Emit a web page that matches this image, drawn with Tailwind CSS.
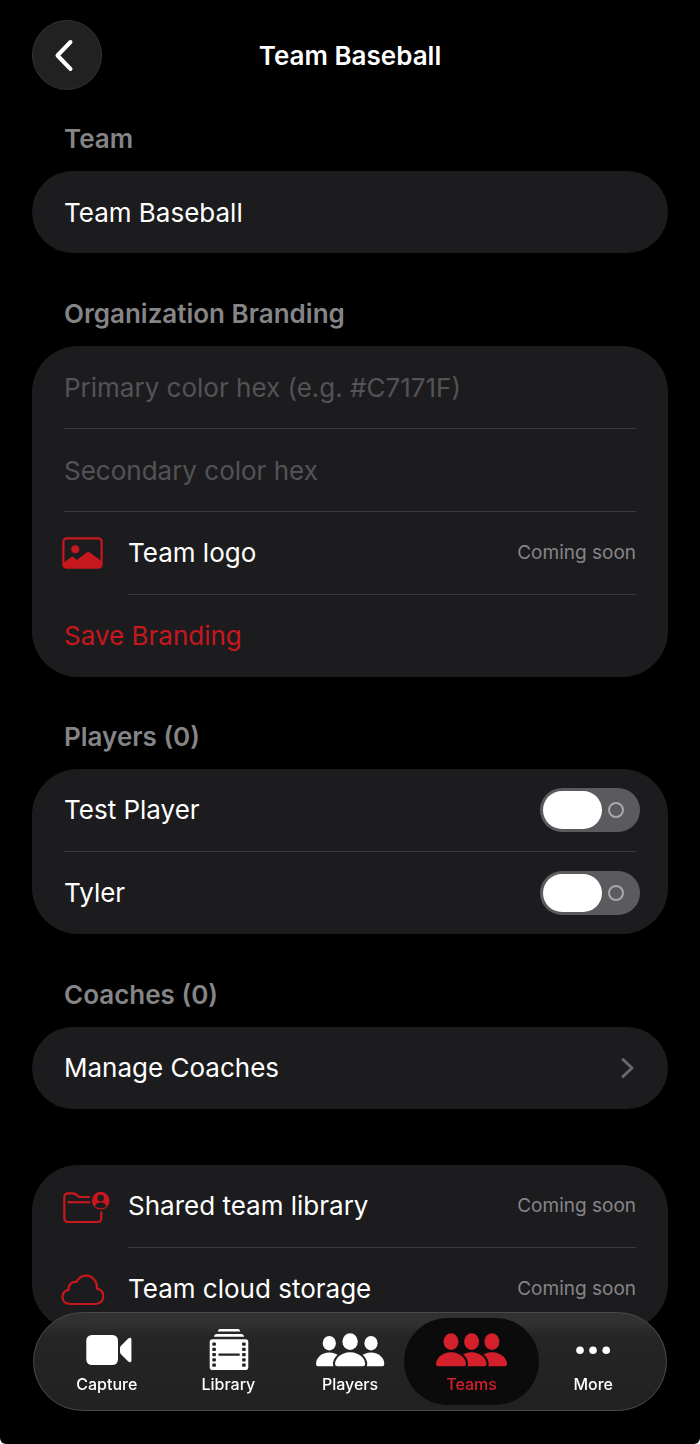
<!DOCTYPE html>
<html lang="en">
<head>
    <meta charset="UTF-8">
    <meta name="viewport" content="width=device-width, initial-scale=1.0">
    <title>Team Baseball</title>
    <script src="https://cdn.jsdelivr.net/npm/@tailwindcss/browser@4"></script>
</head>
<body class="bg-white font-['Inter','Liberation_Sans',sans-serif] text-[26px] leading-8 text-white">
    <div class="min-h-screen rounded-b-md bg-black px-8 pt-5 pb-28">

        <header class="mb-[33px] grid grid-cols-[70px_1fr_70px] items-center">
            <button type="button" aria-label="Back" class="flex size-[70px] items-center justify-center rounded-full border border-[#333334] bg-[#212121]">
                <svg class="size-10" viewBox="0 0 40 40" fill="none" stroke="currentColor" stroke-width="4" stroke-linecap="round" stroke-linejoin="round">
                    <path d="M23.5 7 L10.5 20.5 L23.5 34"/>
                </svg>
            </button>
            <h1 class="pt-0.5 text-center font-semibold">Team Baseball</h1>
        </header>

        <main>
            <!-- Team -->
            <section>
                <h2 class="mb-4 px-8 font-semibold text-[#858588]"><label for="teamName">Team</label></h2>
                <div class="rounded-[41px] bg-[#1c1c1e] px-8">
                    <input id="teamName" type="text" value="Team Baseball" class="block h-[82px] w-full bg-transparent outline-none">
                </div>
            </section>

            <!-- Branding -->
            <section class="mt-[45px]">
                <h2 class="mb-4 px-8 font-semibold text-[#858588]">Organization Branding</h2>
                <form class="rounded-[46px] bg-[#1c1c1e] px-8">
                    <input type="text" aria-label="Primary color hex" placeholder="Primary color hex (e.g. #C7171F)" class="block h-[83px] w-full border-b border-[#38383a] bg-transparent outline-none placeholder:text-[#535356]">
                    <input type="text" aria-label="Secondary color hex" placeholder="Secondary color hex" class="block h-[83px] w-full border-b border-[#38383a] bg-transparent outline-none placeholder:text-[#535356]">
                    <div class="flex items-center">
                        <div class="w-16 shrink-0">
                            <svg class="-ml-1 h-9 w-[52px]" viewBox="0 1 52 36" fill="#c7171f">
                                <rect x="3.4" y="3.4" width="38.2" height="29.2" rx="3.2" fill="none" stroke="#c7171f" stroke-width="2.2"/>
                                <circle cx="15.3" cy="14.3" r="4"/>
                                <path d="M4 27.5 L11 22.2 Q12.3 21.2 13.6 22.2 L17 25 L26.6 17.5 Q28.3 16.3 30 17.5 L42 26.5 V32 H4 Z"/>
                            </svg>
                        </div>
                        <div class="flex h-[83px] flex-1 items-center justify-between border-b border-[#38383a]">
                            <span>Team logo</span>
                            <span class="text-[19px] text-[#858588]">Coming soon</span>
                        </div>
                    </div>
                    <button type="button" class="block h-[82px] w-full text-left text-[#c7171f]">Save Branding</button>
                </form>
            </section>

            <!-- Players -->
            <section class="mt-11">
                <h2 class="mb-4 px-8 font-semibold text-[#858588]">Players (0)</h2>
                <div class="rounded-[46px] bg-[#1c1c1e] px-8">
                    <div class="flex h-[83px] items-center justify-between border-b border-[#38383a]">
                        <label for="player1">Test Player</label>
                        <input id="player1" type="checkbox" role="switch" class="-mr-1 flex h-11 w-[100px] appearance-none items-center gap-1.5 rounded-full bg-[#5b5b5f] px-[3px] before:h-[38px] before:w-[59px] before:rounded-full before:bg-white after:size-4 after:rounded-full after:border-2 after:border-[#a8a8aa]">
                    </div>
                    <div class="flex h-[82px] items-center justify-between">
                        <label for="player2">Tyler</label>
                        <input id="player2" type="checkbox" role="switch" class="-mr-1 flex h-11 w-[100px] appearance-none items-center gap-1.5 rounded-full bg-[#5b5b5f] px-[3px] before:h-[38px] before:w-[59px] before:rounded-full before:bg-white after:size-4 after:rounded-full after:border-2 after:border-[#a8a8aa]">
                    </div>
                </div>
            </section>

            <!-- Coaches -->
            <section class="mt-[45px]">
                <h2 class="mb-4 px-8 font-semibold text-[#858588]">Coaches (0)</h2>
                <a href="#" class="flex h-[82px] items-center justify-between rounded-[41px] bg-[#1c1c1e] px-8">
                    <span>Manage Coaches</span>
                    <svg class="h-6 w-4" viewBox="0 0 16 24" fill="none" stroke="#68686b" stroke-width="3" stroke-linecap="round" stroke-linejoin="round">
                        <path d="M3 3.5 L12 12 L3 20.5"/>
                    </svg>
                </a>
            </section>

            <!-- Library and storage -->
            <section class="mt-14 rounded-[46px] bg-[#1c1c1e] px-8">
                <div class="flex items-center">
                    <div class="w-16 shrink-0">
                        <svg class="-ml-1 h-9 w-[52px]" viewBox="0 1 52 36" fill="none" stroke="#c7171f" stroke-width="2.2">
                            <path d="M30 9 H20.5 C17.5 9 16.5 5.4 13 5.4 H8.2 Q4.3 5.4 4.3 9.3 V30 Q4.3 34 8.2 34 H37.4 Q41.3 34 41.3 30 V23.5"/>
                            <path d="M7.5 14.2 H30"/>
                            <circle cx="40.7" cy="12.7" r="8.9" fill="#c7171f" stroke="none"/>
                            <circle cx="40.7" cy="10" r="3.2" fill="#1c1c1e" stroke="none"/>
                            <path d="M35 18.4 Q36 14.6 40.7 14.6 Q45.4 14.6 46.4 18.4 Q44 20.2 40.7 20.2 Q37.4 20.2 35 18.4 Z" fill="#1c1c1e" stroke="none"/>
                        </svg>
                    </div>
                    <div class="flex h-[83px] flex-1 items-center justify-between border-b border-[#38383a]">
                        <span>Shared team library</span>
                        <span class="text-[19px] text-[#858588]">Coming soon</span>
                    </div>
                </div>
                <div class="flex items-center">
                    <div class="w-16 shrink-0">
                        <svg class="-ml-1 h-9 w-[52px]" viewBox="0 0 52 36" fill="none" stroke="#c7171f" stroke-width="2.2" stroke-linejoin="round">
                            <path d="M10.5 33 C5.5 33 2.5 30 2.5 26 C2.5 22.3 5 19.5 8.7 18.6 C8.2 13.5 12 10.2 16.5 11 C18.5 7 22 4.7 26 4.7 C32.5 4.7 37 10 37 17.6 C41 18.5 43.3 21.5 43.3 25.3 C43.3 29.8 40 33 35.5 33 Z"/>
                        </svg>
                    </div>
                    <div class="flex h-[82px] flex-1 items-center justify-between">
                        <span>Team cloud storage</span>
                        <span class="text-[19px] text-[#858588]">Coming soon</span>
                    </div>
                </div>
            </section>
        </main>
    </div>

    <!-- Tab bar -->
    <nav class="fixed inset-x-[33px] bottom-[33px] grid grid-cols-5 rounded-full border border-[#4a4a4b] bg-linear-to-b from-[#313132] from-10% via-[#252526] via-25% to-[#212122] px-3 py-[5px] text-base leading-6 font-medium">
        <a href="#" class="flex h-[87px] flex-col items-center pt-[10px]">
            <svg class="h-11 w-[72px]" viewBox="0 0 72 44" fill="currentColor">
                <rect x="15.3" y="7" width="31.7" height="30" rx="5.5"/>
                <path d="M49 20 Q49 18.6 50 17.7 L57 10.8 Q58.3 9.6 59.5 9.8 Q60.4 10 60.4 11.2 V32.8 Q60.4 34 59.5 34.2 Q58.3 34.4 57 33.2 L50 26.3 Q49 25.4 49 24 Z"/>
            </svg>
            <span>Capture</span>
        </a>
        <a href="#" class="flex h-[87px] flex-col items-center pt-[10px]">
            <svg class="h-11 w-[72px]" viewBox="0 0 72 44" fill="currentColor">
                <path d="M27.5 1 H46.5 Q48 1.5 48.3 3.6 H25.7 Q26 1.5 27.5 1 Z"/>
                <path d="M24 6 H50 Q51.8 6.5 52.2 8.8 H21.8 Q22.2 6.5 24 6 Z"/>
                <rect x="17.7" y="11.3" width="38.6" height="30.7" rx="2.8"/>
                <g fill="#242425">
                    <rect x="20.3" y="14.6" width="3.6" height="3.2" rx=".8"/>
                    <rect x="20.3" y="19.8" width="3.6" height="3.2" rx=".8"/>
                    <rect x="20.3" y="25" width="3.6" height="3.2" rx=".8"/>
                    <rect x="20.3" y="30.2" width="3.6" height="3.2" rx=".8"/>
                    <rect x="20.3" y="35.6" width="3.6" height="3.2" rx=".8"/>
                    <rect x="50.1" y="14.6" width="3.6" height="3.2" rx=".8"/>
                    <rect x="50.1" y="19.8" width="3.6" height="3.2" rx=".8"/>
                    <rect x="50.1" y="25" width="3.6" height="3.2" rx=".8"/>
                    <rect x="50.1" y="30.2" width="3.6" height="3.2" rx=".8"/>
                    <rect x="50.1" y="35.6" width="3.6" height="3.2" rx=".8"/>
                    <rect x="26.3" y="25.5" width="21.6" height="2.2" rx="1"/>
                </g>
            </svg>
            <span>Library</span>
        </a>
        <a href="#" class="flex h-[87px] flex-col items-center pt-[10px]">
            <svg class="h-11 w-[72px]" viewBox="0 0 72 44" fill="currentColor">
                <ellipse cx="15.3" cy="15.2" rx="6.6" ry="7.2"/>
                <ellipse cx="57" cy="15.2" rx="6.6" ry="7.2"/>
                <path d="M4 38.3 Q2 38.3 2 36 C2 30 7.5 24.6 15.3 24.6 C23 24.6 28.6 30 28.6 36 V38.3 Z"/>
                <path d="M68.3 38.3 Q70.3 38.3 70.3 36 C70.3 30 64.8 24.6 57 24.6 C49.3 24.6 43.7 30 43.7 36 V38.3 Z"/>
                <path d="M23.5 38.3 Q21 38.3 21 36 C21 31 26.5 24.2 36.1 24.2 C45.7 24.2 51.2 31 51.2 36 Q51.2 38.3 48.8 38.3 Z" stroke="#242425" stroke-width="4" paint-order="stroke"/>
                <ellipse cx="36.1" cy="13.6" rx="7.7" ry="8.4"/>
            </svg>
            <span>Players</span>
        </a>
        <a href="#" aria-current="page" class="-mx-[7px] flex h-[87px] flex-col items-center rounded-full bg-[#0b0b0c] pt-[10px] text-[#d3202a]">
            <svg class="h-11 w-[72px] overflow-visible" viewBox="1 0 72 44" fill="currentColor">
                <g stroke="#0b0b0c" stroke-width="4" paint-order="stroke">
                    <path d="M44.5 38.3 Q42 38.3 42 36 C42 31 47.5 24.2 57 24.2 C66.6 24.2 72 31 72 36 Q72 38.3 69.7 38.3 Z"/>
                    <path d="M24 38.3 Q21.5 38.3 21.5 36 C21.5 31 27 24.2 36.5 24.2 C46.1 24.2 51.6 31 51.6 36 Q51.6 38.3 49.2 38.3 Z"/>
                    <path d="M3.4 38.3 Q1 38.3 1 36 C1 31 6.5 24.2 16 24.2 C25.6 24.2 31 31 31 36 Q31 38.3 28.7 38.3 Z"/>
                </g>
                <ellipse cx="16" cy="13.6" rx="7.5" ry="8.4"/>
                <ellipse cx="36.6" cy="13.6" rx="7.5" ry="8.4"/>
                <ellipse cx="56.9" cy="13.6" rx="7.5" ry="8.4"/>
            </svg>
            <span>Teams</span>
        </a>
        <a href="#" class="flex h-[87px] flex-col items-center pt-[10px]">
            <svg class="h-11 w-[72px]" viewBox="0 0 72 44" fill="currentColor">
                <circle cx="23" cy="22.2" r="3.8"/>
                <circle cx="36" cy="22.2" r="3.8"/>
                <circle cx="49.2" cy="22.2" r="3.8"/>
            </svg>
            <span>More</span>
        </a>
    </nav>
</body>
</html>
